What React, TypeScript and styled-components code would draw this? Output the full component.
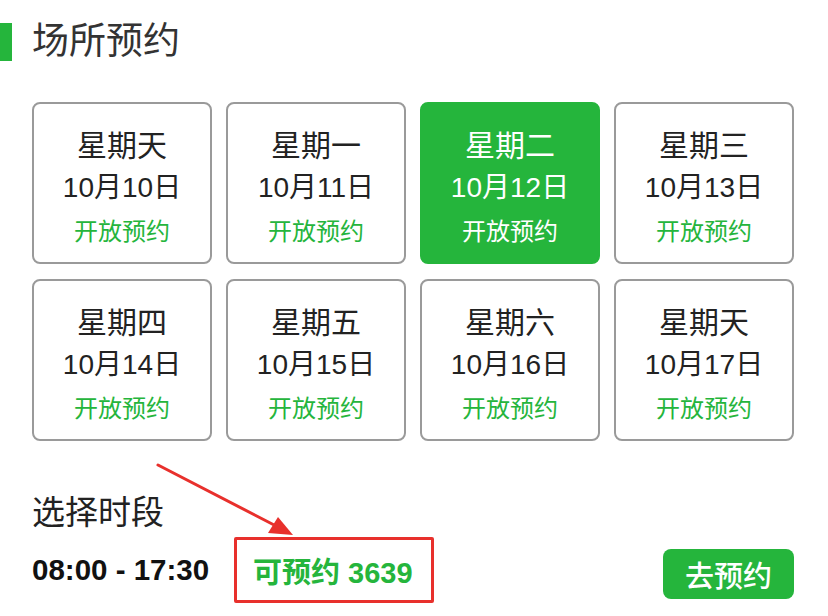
import React from "react";
import styled, { createGlobalStyle } from "styled-components";

const GREEN = "#25b53c";

const Global = createGlobalStyle`
  html, body { margin: 0; padding: 0; background: #fff; }
  body { font-family: "Liberation Sans", "Noto Sans CJK SC", sans-serif; color: #222; }
`;

const Page = styled.div`
  position: relative;
  width: 828px;
  height: 616px;
  overflow: hidden;
  box-sizing: border-box;
  padding: 22px 34px 0 0;
`;

const Header = styled.div`
  display: flex;
  align-items: center;
  height: 40px;
`;

const Bar = styled.div`
  width: 12px;
  height: 38px;
  background: ${GREEN};
`;

const Title = styled.h1`
  margin: 0 0 0 20px;
  font-weight: 400;
  font-size: 37px;
  line-height: 40px;
  color: #333;
`;

const Body = styled.div`
  padding-left: 32px;
`;

const Grid = styled.div`
  margin-top: 40px;
  display: grid;
  grid-template-columns: repeat(4, 180px);
  grid-auto-rows: 162px;
  column-gap: 14px;
  row-gap: 15px;
`;

const Card = styled.div<{ $active?: boolean }>`
  box-sizing: border-box;
  border-radius: 8px;
  border: 2px solid ${(p) => (p.$active ? GREEN : "#9a9a9a")};
  background: ${(p) => (p.$active ? GREEN : "#fff")};
  color: ${(p) => (p.$active ? "#fff" : "#222")};
  display: flex;
  flex-direction: column;
  align-items: center;
  padding-top: 24px;
`;

const Day = styled.div`
  font-size: 30px;
  line-height: 36px;
`;

const DateText = styled.div`
  margin-top: 4px;
  font-size: 28px;
  line-height: 40px;
`;

const Status = styled.div<{ $active?: boolean }>`
  margin-top: 8px;
  font-size: 24px;
  line-height: 32px;
  color: ${(p) => (p.$active ? "#fff" : GREEN)};
`;

const SubTitle = styled.div`
  margin-top: 52px;
  font-size: 33px;
  line-height: 40px;
  color: #222;
`;

const SlotRow = styled.div`
  margin-top: 4px;
  display: flex;
  align-items: center;
`;

const Time = styled.div`
  font-weight: 700;
  font-size: 29.5px;
  color: #111;
  width: 202px;
`;

const Highlight = styled.div`
  box-sizing: border-box;
  width: 200px;
  height: 66px;
  border: 3px solid #e8302c;
  border-radius: 2px;
  display: flex;
  align-items: center;
  padding-left: 16px;
  font-weight: 700;
  font-size: 29px;
  color: ${GREEN};
`;

const Button = styled.button`
  margin-left: auto;
  margin-top: 8px;
  width: 131px;
  height: 50px;
  border: none;
  border-radius: 8px;
  background: ${GREEN};
  color: #fff;
  font-family: inherit;
  font-size: 29px;
  font-weight: 500;
  padding: 0;
`;

const Arrow = styled.svg`
  position: absolute;
  left: 150px;
  top: 455px;
  pointer-events: none;
`;

const days = [
  { d: "星期天", date: "10月10日" },
  { d: "星期一", date: "10月11日" },
  { d: "星期二", date: "10月12日", active: true },
  { d: "星期三", date: "10月13日" },
  { d: "星期四", date: "10月14日" },
  { d: "星期五", date: "10月15日" },
  { d: "星期六", date: "10月16日" },
  { d: "星期天", date: "10月17日" },
];

export default function App() {
  return (
    <Page>
      <Global />
      <Header>
        <Bar />
        <Title>场所预约</Title>
      </Header>
      <Body>
        <Grid>
          {days.map((x, i) => (
            <Card key={i} $active={x.active}>
              <Day>{x.d}</Day>
              <DateText>{x.date}</DateText>
              <Status $active={x.active}>开放预约</Status>
            </Card>
          ))}
        </Grid>
        <SubTitle>选择时段</SubTitle>
        <SlotRow>
          <Time>08:00 - 17:30</Time>
          <Highlight>可预约 3639</Highlight>
          <Button>去预约</Button>
        </SlotRow>
      </Body>
      <Arrow width="160" height="100" viewBox="0 0 160 100">
        <line x1="8" y1="10" x2="128" y2="72" stroke="#e8302c" strokeWidth="3" strokeLinecap="round" />
        <polygon points="143,80 118,78 128,62" fill="#e8302c" />
      </Arrow>
    </Page>
  );
}
